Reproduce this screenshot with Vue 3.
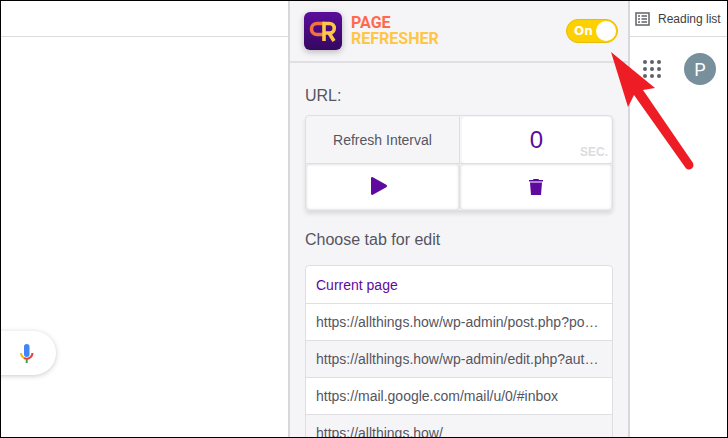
<script setup>
const rows = [
  { text: 'https://allthings.how/wp-admin/post.php?post=12345&action=edit', alt: false },
  { text: 'https://allthings.how/wp-admin/edit.php?author=12&post_type=post', alt: true },
  { text: 'https://mail.google.com/mail/u/0/#inbox', alt: false },
  { text: 'https://allthings.how/', alt: true },
]
</script>

<template>
  <div class="page">
    <div class="browser">
      <div class="topline"></div>
      <div class="mic-pill">
        <svg width="14" height="20" viewBox="0 0 14 20">
          <rect x="4" y="1" width="5.500" height="13" rx="2.750" fill="#4285f4" />
          <path d="M1 10a6 6 0 0 0 3 5" fill="none" stroke="#fbbc04" stroke-width="2" />
          <path d="M4 15a6 6 0 0 0 5.500 0a6 6 0 0 0 3-5" fill="none" stroke="#ea4335" stroke-width="2" />
          <rect x="5.700" y="16" width="2" height="4" fill="#34a853" />
        </svg>
      </div>
    </div>

    <section class="popup">
      <header class="head">
        <div class="logo">
          <svg width="38" height="38" viewBox="0 0 38 38">
            <defs>
              <linearGradient id="lg" x1="0" y1="0" x2="0" y2="1">
                <stop offset="0" stop-color="#5b0c9c" />
                <stop offset="1" stop-color="#34085f" />
              </linearGradient>
            </defs>
            <rect width="38" height="38" rx="6" fill="url(#lg)" />
            <path d="M21 11.500h-8a5.500 5.500 0 0 0 0 11h7" fill="none" stroke="#f4703c" stroke-width="3.600" />
            <path d="M20 29V11.500h5.500a4.500 4.500 0 0 1 0 9.500H20M25 21l5 8" fill="none" stroke="#fdc84a" stroke-width="3.600" />
          </svg>
        </div>
        <div class="brand">
          <span class="brand-a">PAGE</span>
          <span class="brand-b">REFRESHER</span>
        </div>
        <div class="toggle">
          <span>On</span>
          <i class="knob"></i>
        </div>
      </header>

      <div class="body">
        <div class="url">URL:</div>
        <div class="panel">
          <div class="cell label">Refresh Interval</div>
          <div class="cell value"><span class="zero">0</span><span class="sec">SEC.</span></div>
          <div class="cell action play">
            <svg width="16" height="18" viewBox="0 0 16 18"><path d="M0 1.500C0 .4.900-.2 1.800.3l13.500 7.400c.9.500.9 2 0 2.600L1.800 17.700C.9 18.200 0 17.600 0 16.500z" fill="#5f0a9f" /></svg>
          </div>
          <div class="cell action">
            <svg width="14" height="16" viewBox="0 0 14 16"><path d="M4.500 0h5l.8 1H14v1.400H0V1h3.700zM1 3.600h12L12 16H2z" fill="#5f0a9f" /></svg>
          </div>
        </div>

        <div class="choose">Choose tab for edit</div>
        <ul class="tabs">
          <li class="tab current">Current page</li>
          <li v-for="row in rows" :key="row.text" class="tab" :class="{ alt: row.alt }"><span>{{ row.text }}</span></li>
        </ul>
      </div>
    </section>

    <aside class="side">
      <div class="reading">
        <svg width="15" height="14" viewBox="0 0 15 14">
          <rect x="1" y="1" width="13" height="12" fill="none" stroke="#5f6368" stroke-width="1.500" />
          <path d="M3 4h2M3 7h2M3 10h2M6.500 4H12M6.500 7H12M6.500 10H12" stroke="#5f6368" stroke-width="1.300" />
        </svg>
        <span>Reading list</span>
      </div>
      <div class="side-row">
        <div class="dots"><i v-for="n in 9" :key="n"></i></div>
        <div class="avatar">P</div>
      </div>
    </aside>

    <svg class="arrow" width="90" height="126" viewBox="0 0 90 126">
      <path d="M2 1L46 37 34 39 84 112a4.300 4.300 0 0 1-8 4L25 44 19 56z" fill="#ee1c25" />
    </svg>
  </div>
</template>

<style>
html, body { margin: 0; background: #fff; }
</style>

<style scoped>
.page {
  position: relative;
  width: 728px;
  height: 438px;
  box-sizing: border-box;
  border: 1px solid #000;
  display: flex;
  overflow: hidden;
  background: #fff;
  font-family: "Liberation Sans", Arial, sans-serif;
}
.browser {
  position: relative;
  width: 287px;
  flex: none;
}
.topline { margin-top: 35px; height: 1px; background: #dadce0; }
.mic-pill {
  position: absolute;
  left: -30px;
  top: 330px;
  width: 85px;
  height: 44px;
  border-radius: 22px;
  background: #fff;
  box-shadow: 0 1px 5px rgba(60, 64, 67, .28);
  display: flex;
  align-items: center;
  justify-content: flex-end;
  padding-right: 22px;
  box-sizing: border-box;
}
.popup {
  width: 342px;
  flex: none;
  box-sizing: border-box;
  background: #f5f5f8;
  border-left: 2px solid #d8d8dc;
  border-right: 2px solid #d8d8dc;
  color: #55555f;
}
.head {
  height: 62px;
  box-sizing: border-box;
  display: flex;
  align-items: center;
  padding: 0 10px 1px 14px;
  border-bottom: 2px solid #e0e0e4;
}
.logo { height: 38px; filter: drop-shadow(0 2px 3px rgba(0,0,0,.25)); }
.brand {
  display: flex;
  flex-direction: column;
  margin-left: 9px;
  font-family: Roboto, sans-serif;
  font-weight: 700;
  font-size: 16px;
  line-height: 16px;
}
.brand-a { color: #ff6a4d; }
.brand-b { color: #ffc645; }
.toggle {
  margin-left: auto;
  width: 52px;
  height: 24px;
  box-sizing: border-box;
  border-radius: 12px;
  background: #fdd000;
  border: 1px solid #e8bc0a;
  display: flex;
  align-items: center;
  justify-content: space-between;
  padding: 0 1px 0 7px;
  color: #fff;
  font: 700 12px "DejaVu Sans", sans-serif;
}
.knob { width: 20px; height: 20px; border-radius: 50%; background: #fff; }
.body { padding: 0 15px; }
.url { margin-top: 22px; font-size: 16px; line-height: 22px; }
.panel {
  margin-top: 8px;
  width: 308px;
  height: 96px;
  box-sizing: border-box;
  border: 1px solid #dedee3;
  border-radius: 4px;
  display: grid;
  grid-template-columns: 154px 1fr;
  grid-template-rows: 48px 1fr;
  box-shadow: 0 3px 4px rgba(0,0,0,.1);
}
.cell { display: flex; align-items: center; justify-content: center; position: relative; }
.label { font-size: 14px; border-right: 1px solid #dedee3; border-bottom: 1px solid #dedee3; }
.value { background: #fff; margin: 1px 1px 1px 2px; border-radius: 4px; }
.value::after { content: ""; position: absolute; left: -2px; right: -1px; bottom: -1px; height: 1px; background: #dedee3; }
.zero { color: #5f0a9f; font-size: 24px; }
.sec { position: absolute; right: 3px; bottom: 4px; font-size: 12px; font-weight: 700; color: #dcdcdf; }
.action { background: #fff; border-radius: 3px; box-shadow: inset 0 0 3px rgba(0,0,0,.22); }
.play { border-right: 1px solid #dedee3; }
.play svg { margin: -3px 7px 0 0; }
.choose { margin-top: 18px; font-size: 16px; line-height: 22px; }
.tabs {
  list-style: none;
  margin: 14px 0 0;
  padding: 0;
  width: 308px;
  box-sizing: border-box;
  border: 1px solid #dedee3;
  border-radius: 4px;
  background: #fff;
}
.tab {
  height: 37px;
  box-sizing: border-box;
  padding: 0 12px 0 10px;
  border-top: 1px solid #dedee3;
  font-size: 14px;
  line-height: 36px;
  color: #55555f;
}
.tab:first-child { border-top: 0; line-height: 38px; }
.tab span { display: block; overflow: hidden; white-space: nowrap; text-overflow: ellipsis; }
.current { color: #5f0a9f; }
.alt { background: #f5f5f8; }
.side { flex: 1; min-width: 0; }
.reading {
  height: 36px;
  box-sizing: border-box;
  border-bottom: 1px solid #dadce0;
  display: flex;
  align-items: center;
  gap: 8px;
  padding-left: 5px;
  font: 12px "Liberation Sans", sans-serif;
  color: #3c4043;
}
.side-row { display: flex; align-items: center; margin-top: 16px; padding-left: 13px; gap: 23px; }
.dots { display: grid; grid-template-columns: repeat(3, 4px); gap: 3px; width: 18px; }
.dots i { width: 4px; height: 4px; border-radius: 50%; background: #5f6368; }
.avatar {
  width: 32px;
  height: 32px;
  border-radius: 50%;
  background: #78909c;
  color: #fff;
  font: 400 18px Roboto, sans-serif;
  display: flex;
  align-items: center;
  justify-content: center;
}
.arrow { position: absolute; left: 608px; top: 50px; }
</style>
